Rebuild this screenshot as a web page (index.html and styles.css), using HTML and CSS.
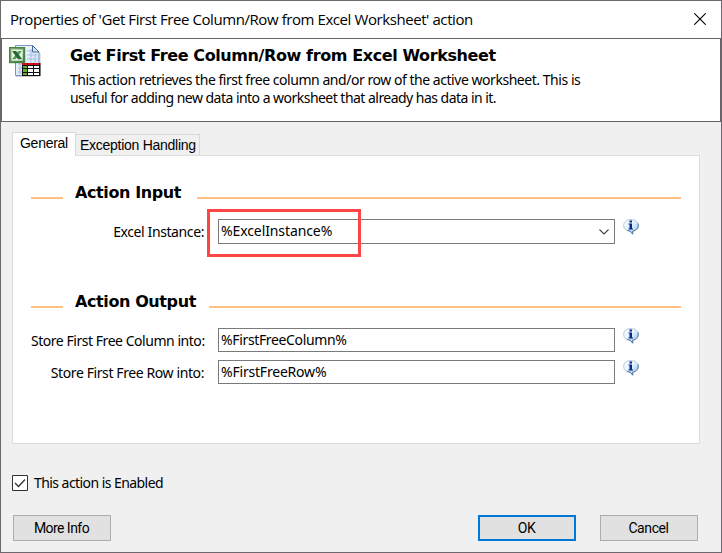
FILE: index.html
```html
<!DOCTYPE html>
<html lang="en">
<head>
<meta charset="utf-8">
<title>Action properties</title>
<link rel="stylesheet" href="styles.css">
</head>
<body>
<svg width="0" height="0" class="defs" aria-hidden="true">
  <defs>
    <linearGradient id="bubble" x1="0" y1="0" x2="1" y2="1"><stop offset="0" stop-color="#fff"/><stop offset=".45" stop-color="#e3f3fd"/><stop offset="1" stop-color="#8fc0e8"/></linearGradient>
    <symbol id="info" viewBox="0 0 16 16">
      <path d="M8 .5C3.700.5.600 3 .6 6.500c0 3 2.100 5 5.400 5.700h1.500l2.200 3v-3c3.500-.5 5.700-2.700 5.700-5.700C15.400 3 12.300.5 8 .5z" fill="url(#bubble)" stroke="#a9bccd" stroke-width=".8"/>
      <path d="M15 4.500c1 3.500-1 6.800-5.300 7.700v3l-2.500-3-3-.8" fill="none" stroke="#456f9d" stroke-width=".9"/>
      <path d="M6.500 1.500h2.500v2H6.500zM5.500 4.500H9v5h1v1H5.500v-1h1v-4h-1z" fill="#08298f"/>
    </symbol>
  </defs>
</svg>
<main class="window">
  <header class="titlebar">
    <span>Properties of 'Get First Free Column/Row from Excel Worksheet' action</span>
    <svg class="close" viewBox="0 0 12 12"><path d="M.3.300l11.400 11.400M11.700.300.300 11.700" stroke="#000" stroke-width="1.100"/></svg>
  </header>
  <section class="banner">
    <svg class="excel" viewBox="0 0 33 33">
      <defs>
        <linearGradient id="page" x2="1" y2="1"><stop stop-color="#f7fbff"/><stop offset="1" stop-color="#cbdcf3"/></linearGradient>
        <linearGradient id="green" x2="1" y2="1"><stop stop-color="#8dbb80"/><stop offset="1" stop-color="#347a36"/></linearGradient>
      </defs>
      <path d="M7 31.500h23.500M31 8v22" stroke="#999" stroke-opacity=".5"/>
      <path d="M6.500.5h17l6.500 6.500v23.500H6.500z" fill="url(#page)" stroke="#7593c4"/>
      <path d="M18 6h5M18 10h10M18 14h10M9 19h5M9 23h5M9 27h5M22 4v15M26 9v10M11 18v11" stroke="#aabfe3" fill="none"/>
      <path d="M23.500.5v6.500H30z" fill="#d7e5fa" stroke="#466995"/>
      <rect x=".6" y="2.600" width="15" height="15" fill="url(#green)" stroke="#458346" stroke-width="1.200"/>
      <rect x="2.500" y="4.500" width="11.200" height="11.200" fill="#eff6e9"/>
      <path d="M12.800 6h-3.300l-6.500 8.200h3.400z" fill="#56935a"/><path d="M3 6h4.200l6 8.200H9z" fill="#236b2e"/>
      <path d="M13 18h18.500v13H13z" fill="#111"/>
      <path d="M13 18h5v2h-5zM19 18h5v2h-5zM25 18h5v2h-5z" fill="#d50f20"/>
      <path d="M14 21h4v2h-4zM14 24h4v3h-4zM14 28h4v2h-4z" fill="#64ad2d"/>
      <path d="M19 21h5v2h-5zM25 21h5v2h-5zM19 24h5v3h-5zM25 24h5v3h-5zM19 28h5v2h-5zM25 28h5v2h-5z" fill="#fff"/>
    </svg>
    <div class="intro">
      <h1>Get First Free Column/Row from Excel Worksheet</h1>
      <p>This action retrieves the first free column and/or row of the active worksheet. This is</p>
      <p class="second">useful for adding new data into a worksheet that already has data in it.</p>
    </div>
  </section>
  <section class="content">
    <nav class="tabs">
      <div class="tab active">General</div>
      <div class="tab">Exception Handling</div>
    </nav>
    <div class="panel">
      <h2 class="input-title"><span>Action Input</span></h2>
      <div class="row first">
        <label>Excel Instance:</label>
        <div class="field combo">%ExcelInstance%
          <svg class="arrow" viewBox="0 0 10 6"><path d="M.5.500 5 5 9.500.5" fill="none" stroke="#444" stroke-width="1.100"/></svg>
          <i class="highlight"></i>
        </div>
        <svg class="info"><use href="#info"/></svg>
      </div>
      <h2 class="output-title"><span>Action Output</span></h2>
      <div class="row">
        <label>Store First Free Column into:</label>
        <div class="field column">%FirstFreeColumn%</div>
        <svg class="info"><use href="#info"/></svg>
      </div>
      <div class="row">
        <label class="row-label">Store First Free Row into:</label>
        <div class="field">%FirstFreeRow%</div>
        <svg class="info"><use href="#info"/></svg>
      </div>
    </div>
    <div class="enabled">
      <svg class="check" viewBox="0 0 16 16"><path d="M.5.500h15v15H.5z" fill="#fff" stroke="#333"/><path d="M3 8l3.500 3.500 6.500-7" fill="none" stroke="#333" stroke-width="1.300"/></svg>
      <span>This action is Enabled</span>
    </div>
    <footer>
      <button class="more">More Info</button>
      <button class="ok">OK</button>
      <button class="cancel">Cancel</button>
    </footer>
  </section>
</main>
</body>
</html>
```
FILE: styles.css
```css
* { box-sizing: border-box; }
body { margin: 0; color: #000; font: 14px/17px "Noto Sans", sans-serif; letter-spacing: -.46px; }
.defs { position: absolute; }
.window { width: 722px; height: 553px; border: 1px solid #6b696b; background: #f0f0f0; overflow: hidden; white-space: nowrap; }
.titlebar { height: 37px; padding: 0 15px 0 9px; display: flex; align-items: center; justify-content: space-between; background: #fff; font: 15px/20px "Open Sans", sans-serif; letter-spacing: -.42px; }
.titlebar span { margin-top: -1px; }
.close { width: 12px; height: 12px; margin-top: -1px; }
.banner { height: 84px; border: 1px solid #646464; background: #fff; display: flex; padding: 6px 0 0 7px; }
.excel { width: 33px; height: 33px; flex: none; }
.intro { margin-left: 28px; }
h1, h2, p { margin: 0; }
h1, h2 { font-family: "DejaVu Sans", sans-serif; font-size: 16px; line-height: 22px; letter-spacing: -.4px; }
h1 { margin-bottom: 4px; }
p { line-height: 18px; }
.second { letter-spacing: -.53px; }
.content { padding: 10px 20px 0 11px; }
.tabs { display: flex; align-items: flex-end; height: 23px; font: 14px/17px "Liberation Sans", sans-serif; letter-spacing: -.27px; }
.tab { width: 124px; height: 21px; border: 1px solid #d9d9d9; border-width: 1px 1px 0 0; padding: 2px 0 0 4px; }
.tab.active { width: 64px; height: 24px; margin-bottom: -1px; border-left-width: 1px; background: #fff; padding: 2px 0 0 7px; position: relative; }
.panel { width: 688px; height: 289px; border: 1px solid #dcdcdc; background: #fff; padding-left: 18px; }
h2 { display: flex; align-items: center; width: 650px; height: 22px; }
h2 span { width: 122px; margin-left: 12px; }
.output-title span { width: 134px; }
h2::before, h2::after { content: ""; height: 2px; background: #ffc080; margin-top: 10px; }
h2::before { width: 32px; }
h2::after { flex: 1; }
.input-title { margin-top: 26px; }
.output-title { margin-top: 47px; }
.row { display: flex; align-items: flex-start; height: 32px; }
label { width: 173px; text-align: right; padding-top: 4px; flex: none; }
.row-label { letter-spacing: -.4px; }
.first label { letter-spacing: -.4px; }
.field { position: relative; width: 397px; height: 24px; border: 1px solid #7a7a7a; margin-left: 14px; padding: 2px 0 0 2px; letter-spacing: -.2px; }
.row.first { margin-top: 15px; height: 25px; }
.output-title + .row { margin-top: 15px; }
.combo { height: 25px; letter-spacing: -.1px; }
.column { letter-spacing: -.35px; }
.arrow { position: absolute; right: 5px; top: 9px; width: 10px; height: 6px; }
.highlight { position: absolute; left: -12px; top: -11px; width: 154px; height: 48px; border: 3px solid #fc4545; }
.info { width: 16px; height: 16px; margin-left: 8px; }
.enabled { display: flex; align-items: center; gap: 6px; height: 17px; margin-top: 31px; letter-spacing: -.56px; }
.enabled span { margin-top: -2px; }
.check { width: 16px; height: 16px; margin-top: -1px; }
footer { display: flex; margin: 23px 0 0 1px; }
button { width: 98px; height: 26px; border: 1px solid #adadad; background: #e1e1e1; padding: 0 1px 0 0; color: #000; font: 14px/17px Roboto, sans-serif; letter-spacing: -.4px; }
.more { letter-spacing: -.55px; }
.ok { margin-left: 367px; border: 2px solid #0078d7; }
.cancel { margin-left: 24px; }
```
